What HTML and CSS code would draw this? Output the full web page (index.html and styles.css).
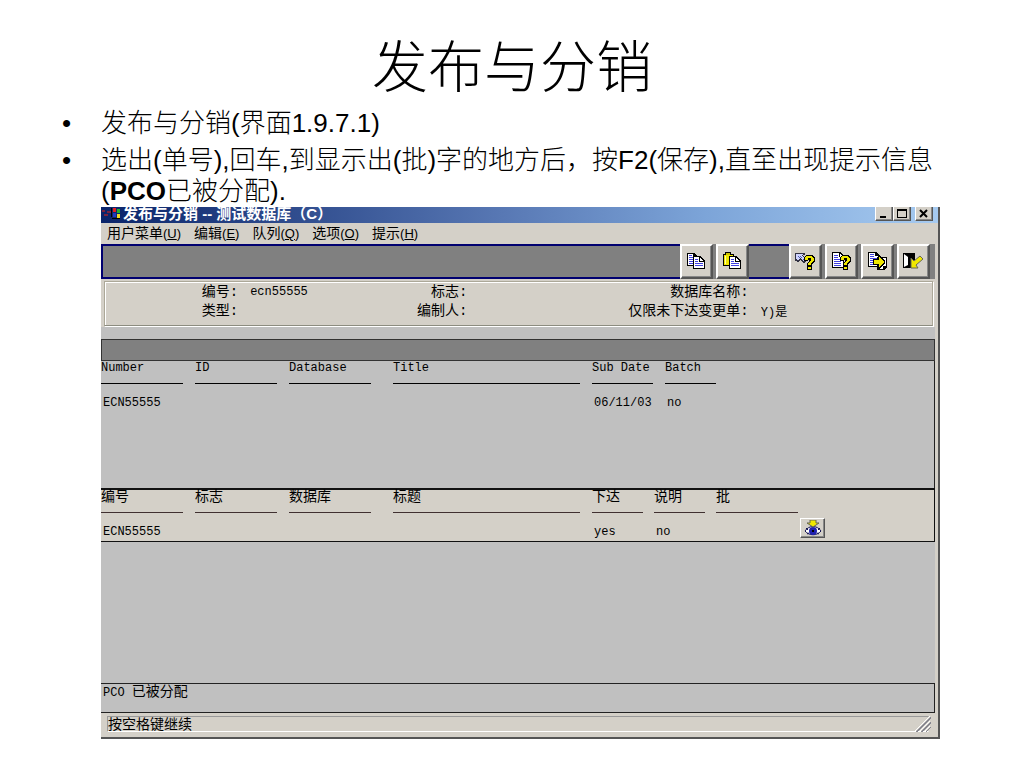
FILE: index.html
```html
<!DOCTYPE html>
<html lang="zh-CN">
<head>
    <meta charset="UTF-8">
    <meta name="viewport" content="width=device-width, initial-scale=1.0">
    <title>发布与分销</title>
    <link rel="stylesheet" href="styles.css">
</head>
<body>

<h1>发布与分销</h1>
<ul class="notes">
    <li>发布与分销(界面1.9.7.1)</li>
    <li>选出(单号),回车,到显示出(批)字的地方后，按F2(保存),直至出现提示信息(<b>PCO</b>已被分配).</li>
</ul>

<main class="window">
    <header class="titlebar">
        <svg class="app-icon" width="20" height="16" viewBox="0 0 20 16" shape-rendering="crispEdges">
            <path d="M1 3h3v2H1zM6 4h4v2H6zM3 7h4v2H3z" fill="#7a2440"/>
            <path d="M12 1h3v4h-3z" fill="#e02020"/>
            <path d="M16 2h3v4h-3z" fill="#20b030"/>
            <path d="M12 6h3v4h-3z" fill="#2038c0"/>
            <path d="M16 7h3v4h-3z" fill="#f0d820"/>
            <path d="M10 1h1v9h-1zM11 11h8v1h-8z" fill="#000"/>
        </svg>
        <h2>发布与分销 -- 测试数据库（C）</h2>
        <div class="controls">
            <button aria-label="最小化"><svg width="10" height="10" viewBox="0 0 10 10"><path d="M1 7h6v2H1z"/></svg></button>
            <button aria-label="最大化"><svg width="10" height="10" viewBox="0 0 10 10"><path d="M0 0h10v9H0zM1 2v6h8V2z" fill-rule="evenodd"/></svg></button>
            <button class="close" aria-label="关闭"><svg width="10" height="10" viewBox="0 0 10 10"><path d="M1 1l7 7M8 1l-7 7" stroke="#000" stroke-width="2"/></svg></button>
        </div>
    </header>

    <nav class="menu">
        <a href="#">用户菜单<span>(<u>U</u>)</span></a>
        <a href="#">编辑<span>(<u>E</u>)</span></a>
        <a href="#">队列<span>(<u>Q</u>)</span></a>
        <a href="#">选项<span>(<u>O</u>)</span></a>
        <a href="#">提示<span>(<u>H</u>)</span></a>
    </nav>

    <div class="toolbar">
        <span class="well wide"></span>
        <div class="group">
            <button aria-label="复制">
                <svg width="20" height="18" viewBox="0 0 20 18" shape-rendering="crispEdges">
                    <path d="M1 1h7l3 3v10H1z"/>
                    <path d="M2 2h5v3h3v8H2z" fill="#fff"/>
                    <path d="M3 3h3v1H3zM3 5h4v1H3zM3 7h4v1H3zM3 9h4v1H3zM3 11h4v1H3z" fill="#4040e0"/>
                    <path d="M7 4h7l5 5v8H7z"/>
                    <path d="M8 5h5v5h5v6H8z" fill="#fff"/>
                    <path d="M14 6l3 3h-3z" fill="#fff"/>
                    <path d="M9 7h3v1H9zM9 9h3v1H9zM9 11h8v1H9zM9 13h8v1H9z" fill="#4040e0"/>
                </svg>
            </button>
            <button aria-label="粘贴">
                <svg width="20" height="18" viewBox="0 0 20 18" shape-rendering="crispEdges">
                    <path d="M1 2h2V0h6v2h3v12H1z"/>
                    <path d="M2 3h9v10H2z" fill="#f0e800"/>
                    <path d="M4 1h4v2H4z" fill="#c8c000"/>
                    <path d="M3 4h1v8H3z" fill="#fffcb0"/>
                    <path d="M7 4h7l5 5v8H7z"/>
                    <path d="M8 5h5v5h5v6H8z" fill="#fff"/>
                    <path d="M14 6l3 3h-3z" fill="#fff"/>
                    <path d="M9 7h3v1H9zM9 9h3v1H9zM9 11h8v1H9zM9 13h8v1H9z" fill="#4040e0"/>
                </svg>
            </button>
        </div>
        <span class="well"></span>
        <div class="group">
            <button aria-label="字段帮助">
                <svg width="20" height="18" viewBox="0 0 20 18" shape-rendering="crispEdges">
                    <path d="M0 1h10v2H8v1h1v1h1v1h1v1h1v2h-1v1h-1v1H8v-1H7V9H6V8H5v1H4v1H2V9H0z" fill="#334"/>
                    <path d="M1 2h7v1H7v1h1v1h1v1h1v1h1v1h-1v1H8V8H7V7H6V6H5v1H4v1H2V7H1z" fill="#d0d4ff"/>
                    <path d="M3 4h1v1H3zM4 5h1v1H4zM5 4h1v1H5zM6 5h1v1H6zM8 7h1v1H8z" fill="#5060b0"/>
                    <path d="M11 3h7v1h1v1h1v5h-1v1h-1v1h-1v6h-5v-7h1v-1h1V8h-1v1h-4V5h1V4h1z"/>
                    <path d="M11 4h6v1h1v1h1v3h-1v1h-1v1h-1v2h-3v-2h1v-1h1V9h1V6h-3v2h-3V5h1zM13 15h3v2h-3z" fill="#f0e800"/>
                </svg>
            </button>
            <button aria-label="程序帮助">
                <svg width="20" height="18" viewBox="0 0 20 18" shape-rendering="crispEdges">
                    <path d="M1 0h8l4 4v12H1z"/>
                    <path d="M2 1h6v4h4v10H2z" fill="#fff"/>
                    <path d="M9 2l3 3H9z" fill="#fff"/>
                    <path d="M3 3h4v1H3zM3 5h4v1H3zM3 7h7v1H3zM3 9h7v1H3zM3 11h7v1H3zM3 13h7v1H3z" fill="#4040e0"/>
                    <path d="M11 3h7v1h1v1h1v5h-1v1h-1v1h-1v6h-5v-7h1v-1h1V8h-1v1h-4V5h1V4h1z"/>
                    <path d="M11 4h6v1h1v1h1v3h-1v1h-1v1h-1v2h-3v-2h1v-1h1V9h1V6h-3v2h-3V5h1zM13 15h3v2h-3z" fill="#f0e800"/>
                </svg>
            </button>
            <button aria-label="转到">
                <svg width="20" height="18" viewBox="0 0 20 18" shape-rendering="crispEdges">
                    <path d="M1 0h8l3 3v12H1z"/>
                    <path d="M2 1h6v3h3v10H2z" fill="#fff"/>
                    <path d="M3 2h4v1H3zM3 4h4v1H3zM3 6h7v1H3zM3 8h4v1H3zM3 10h4v1H3zM3 12h4v1H3z" fill="#4040e0"/>
                    <path d="M10 5h10v10l-3 3h-7z"/>
                    <path d="M11 6h8v8h-3v3h-5z" fill="#fff"/>
                    <path d="M6 7h5V3h1l6 6v2l-6 6h-1v-4H6z"/>
                    <path d="M7 8h5V5l5 5-5 5v-3H7z" fill="#f0e800"/>
                </svg>
            </button>
            <button aria-label="退出">
                <svg width="20" height="18" viewBox="0 0 20 18">
                    <path d="M0 1h12v7H9v8H0z"/>
                    <path d="M1 2l4 3v8l-4 2z" fill="#fff"/>
                    <path d="M8 6l3 3 6-5 3 3-7 6 2 3H8z" fill="#f0e800" stroke="#665"/>
                </svg>
            </button>
        </div>
    </div>

    <form class="filter">
        <label for="number">编号:</label><input id="number" value="ecn55555">
        <label for="mark">标志:</label><input id="mark">
        <label for="database">数据库名称:</label><input id="database">
        <label for="type">类型:</label><input id="type">
        <label for="author">编制人:</label><input id="author">
        <label for="open">仅限未下达变更单:</label><input id="open" value="Y)是">
    </form>

    <section class="results">
        <div class="band"></div>
        <div class="list">
            <table>
                <colgroup>
                    <col class="c-text"><col class="c-text"><col class="c-db"><col class="c-title"><col class="c-date"><col>
                </colgroup>
                <thead>
                    <tr>
                        <th><span class="rule">Number</span></th>
                        <th><span class="rule">ID</span></th>
                        <th><span class="rule">Database</span></th>
                        <th><span class="rule long">Title</span></th>
                        <th><span class="rule date">Sub Date</span></th>
                        <th><span class="rule short">Batch</span></th>
                    </tr>
                </thead>
                <tbody>
                    <tr><td>ECN55555</td><td></td><td></td><td></td><td>06/11/03</td><td>no</td></tr>
                </tbody>
            </table>
        </div>
        <div class="detail">
            <table>
                <colgroup>
                    <col class="c-text"><col class="c-text"><col class="c-db"><col class="c-title"><col class="c-flag"><col class="c-flag"><col class="c-batch"><col>
                </colgroup>
                <thead>
                    <tr>
                        <th><span class="rule">编号</span></th>
                        <th><span class="rule">标志</span></th>
                        <th><span class="rule">数据库</span></th>
                        <th><span class="rule long">标题</span></th>
                        <th><span class="rule short">下达</span></th>
                        <th><span class="rule short">说明</span></th>
                        <th><span class="rule">批</span></th>
                        <th></th>
                    </tr>
                </thead>
                <tbody>
                    <tr>
                        <td>ECN55555</td><td></td><td></td><td></td><td>yes</td><td>no</td><td></td>
                        <td class="action">
                            <button aria-label="查看">
                                <svg width="18" height="16" viewBox="0 0 18 16">
                                    <path d="M1 11c4-6 12-6 16 0-4 5-12 5-16 0z" fill="#fff" stroke="#101050"/>
                                    <path d="M2 8l2 2M16 8l-2 2M3 14l2-1M15 14l-2-1" stroke="#101050"/>
                                    <circle cx="9" cy="11" r="4" fill="#2020b0"/>
                                    <path d="M8 10h2v2H8z" fill="#000"/>
                                    <path d="M6 0h6v3h3l-6 4-6-4h3z" fill="#f0e800" stroke="#665"/>
                                </svg>
                            </button>
                        </td>
                    </tr>
                </tbody>
            </table>
        </div>
        <div class="blank"></div>
    </section>

    <div class="message"><span class="latin">PCO </span>已被分配</div>

    <footer class="status">
        <span class="hint">按空格键继续</span>
        <svg class="grip" width="16" height="16" viewBox="0 0 16 16">
            <path d="M0 15L15 0M5 15L15 5M10 15l5-5" stroke="#fff"/>
            <path d="M1 16L16 1M2 16L16 2M6 16L16 6M7 16l9-9M11 16l5-5" stroke="#85858f"/>
        </svg>
    </footer>
</main>

</body>
</html>
```

FILE: styles.css
```css
* {
    box-sizing: border-box;
}
body {
    margin: 0;
    background: #fff;
    color: #000;
    font-family: "Liberation Sans", "Noto Sans CJK SC", sans-serif;
}
h1 {
    margin: 0;
    padding-top: 28px;
    font-size: 56px;
    font-weight: 300;
    line-height: 80px;
    text-align: center;
}
.notes {
    margin: 0 84px 0 62px;
    padding: 0;
    list-style: none;
    font-size: 26px;
    font-weight: 300;
    line-height: 31px;
}
.notes li {
    display: flow-root;
    padding-left: 39px;
}
.notes li::before {
    content: "•";
    float: left;
    margin-left: -39px;
}
.notes li + li {
    margin-top: 6px;
}
.notes b {
    font-weight: 700;
}

/* window frame */
.window {
    margin: 0 84px 0 101px;
    padding-right: 3px;
    border-right: 2px solid #555;
    border-bottom: 2px solid #555;
    background: #d4d0c8;
    font-size: 14px;
}
.window button {
    display: flex;
    align-items: center;
    justify-content: center;
    padding: 0;
    background: #d4d0c8;
    border: 1px solid;
    border-color: #fff #555 #555 #fff;
    box-shadow: inset -1px -1px #888;
}
.titlebar {
    display: flex;
    height: 16px;
    margin-right: -3px;
    padding-right: 5px;
    overflow: hidden;
    background: linear-gradient(to right, #0a246a, #5878b4 48%, #7ca4d8 72%, #a6caf0);
}
.titlebar h2 {
    flex: 1;
    margin: 0;
    padding-left: 2px;
    color: #fff;
    font-size: 15px;
    line-height: 13px;
    white-space: nowrap;
}
.controls {
    display: flex;
}
.controls button {
    width: 18px;
    height: 14px;
    border-top: 0;
}
.controls .close {
    margin-left: 4px;
}
.menu {
    display: flex;
    gap: 13px;
    padding-left: 6px;
    line-height: 21px;
}
.menu a {
    color: #000;
    text-decoration: none;
}
.menu span {
    font-size: 13px;
}

/* toolbar */
.toolbar {
    display: flex;
    height: 35px;
    padding-right: 5px;
    background: #808080;
}
.well {
    width: 40px;
    border: solid #000070;
    border-width: 2px 0;
}
.well.wide {
    flex: 1;
    border-left-width: 2px;
}
.group {
    display: flex;
    gap: 3px;
}
.toolbar button {
    width: 33px;
    padding: 0 2px 2px 0;
    border-width: 2px;
}
.toolbar svg {
    flex: none;
}

/* filter fields */
.filter {
    display: grid;
    grid-template-columns: 133fr 137fr 68fr 125fr 132fr 171fr;
    column-gap: 12px;
    margin: 2px 2px 0 3px;
    padding: 1px 0 4px;
    border: 1px solid #aca899;
    border-bottom-color: #8c8c80;
    box-shadow: inset 1px 1px #fff, 1px 1px #fff;
    line-height: 19px;
}
.filter label {
    text-align: right;
    white-space: nowrap;
}
.filter label,
.filter input,
.window table {
    font-family: "Liberation Mono", "Noto Sans CJK SC", monospace;
}
.filter input {
    width: 100%;
    min-width: 0;
    height: 18px;
    padding: 0;
    border: 0;
    background: none;
    font-size: 12px;
}

/* result tables */
.results {
    margin-top: 1px;
    padding-top: 12px;
    background: #c0c0c0;
}
.band {
    height: 22px;
    border: 1px solid #333;
    background: #808080;
}
.list {
    height: 127px;
    border-right: 1px solid #222;
}
.detail {
    border: solid #111;
    border-width: 2px 1px 1px 0;
    background: #d4d0c8;
}
.blank {
    height: 141px;
}
table {
    width: 100%;
    table-layout: fixed;
    border-collapse: collapse;
}
.c-text {
    width: 94px;
}
.c-db {
    width: 104px;
}
.c-title {
    width: 199px;
}
.c-date {
    width: 73px;
}
.c-flag {
    width: 62px;
}
.c-batch {
    width: 83px;
}
th {
    padding: 0;
    font-weight: normal;
    text-align: left;
    vertical-align: top;
}
.rule {
    display: block;
    width: 82px;
    height: 23px;
    border-bottom: 1px solid #000;
    line-height: 15px;
    white-space: nowrap;
}
.list .rule {
    font-size: 12px;
}
.detail .rule {
    border-color: #403030;
}
.rule.long {
    width: 187px;
}
.rule.date {
    width: 61px;
}
.rule.short {
    width: 51px;
}
td {
    height: 28px;
    padding: 11px 0 0 2px;
    font-size: 12px;
    line-height: 16px;
    vertical-align: top;
}
td.action {
    padding: 5px 0 0 1px;
}
.action button {
    width: 25px;
    height: 20px;
}

/* message and status lines */
.message {
    height: 30px;
    padding-left: 2px;
    border: solid #222;
    border-width: 1px 1px 1px 0;
    background: #c0c0c0;
    line-height: 14px;
}
.latin {
    font-family: "Liberation Mono", monospace;
    font-size: 12px;
    white-space: pre;
}
.status {
    display: flex;
    padding: 3px 4px 5px 6px;
}
.hint {
    flex: 1;
    border: 1px solid #aca899;
    border-color: #999 #d4d0c8 #fff #999;
    line-height: 14px;
}
.grip {
    margin-left: -14px;
}
```
